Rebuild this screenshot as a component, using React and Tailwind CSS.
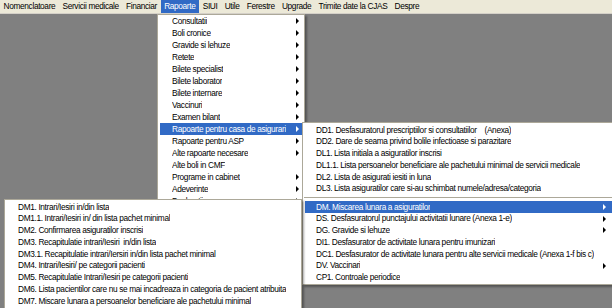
import React from "react";

const barItems = [
  "Nomenclatoare",
  "Servicii medicale",
  "Financiar",
  "Rapoarte",
  "SIUI",
  "Utile",
  "Ferestre",
  "Upgrade",
  "Trimite date la CJAS",
  "Despre",
];

const rapoarte = [
  { t: "Consultatii", sub: true },
  { t: "Boli cronice", sub: true },
  { t: "Gravide si lehuze", sub: true },
  { t: "Retete", sub: true },
  { t: "Bilete specialist", sub: true },
  { t: "Bilete laborator", sub: true },
  { t: "Bilete internare", sub: true },
  { t: "Vaccinuri", sub: true },
  { t: "Examen bilant", sub: true },
  { t: "Rapoarte pentru casa de asigurari", sub: true, on: true },
  { t: "Rapoarte pentru ASP", sub: true },
  { t: "Alte rapoarte necesare", sub: true },
  { t: "Alte boli in CMF" },
  { t: "Programe in cabinet", sub: true },
  { t: "Adeverinte", sub: true },
  { t: "Declaratii", sub: true },
];

const casa = [
  { t: "DD1. Desfasuratorul prescriptiilor si consultatiilor    (Anexa)" },
  { t: "DD2. Dare de seama privind bolile infectioase si parazitare" },
  { t: "DL1. Lista initiala a asiguratilor inscrisi" },
  { t: "DL1.1. Lista persoanelor beneficiare ale pachetului minimal de servicii medicale" },
  { t: "DL2. Lista de asigurati iesiti in luna" },
  { t: "DL3. Lista asiguratilor care si-au schimbat numele/adresa/categoria" },
  { sep: true },
  { t: "DM. Miscarea lunara a asiguratilor", sub: true, on: true },
  { t: "DS. Desfasuratorul punctajului activitatii lunare (Anexa 1-e)", sub: true },
  { t: "DG. Gravide si lehuze", sub: true },
  { t: "DI1. Desfasurator de activitate lunara pentru imunizari" },
  { t: "DC1. Desfasurator de activitate lunara pentru alte servicii medicale (Anexa 1-f bis c)" },
  { t: "DV. Vaccinari", sub: true },
  { t: "CP1. Controale periodice" },
];

const miscarea = [
  "DM1. Intrari/Iesiri in/din lista",
  "DM1.1. Intrari/Iesiri in/ din lista pachet minimal",
  "DM2. Confirmarea asiguratilor inscrisi",
  "DM3. Recapitulatie intrari/Iesiri  in/din lista",
  "DM3.1. Recapitulatie intrari/Iersiri in/din lista pachet minimal",
  "DM4. Intrari/Iesiri/ pe categorii pacienti",
  "DM5. Recapitulatie Intrari/Iesiri pe categorii pacienti",
  "DM6. Lista pacientilor care nu se mai incadreaza in categoria de pacient atribuita",
  "DM7. Miscare lunara a persoanelor beneficiare ale pachetului minimal",
];

function Arrow({ on }) {
  return (
    <svg width="3" height="6" viewBox="0 0 3 6" className="shrink-0">
      <polygon points="0,0 3,3 0,6" fill={on ? "#ffffff" : "#000000"} />
    </svg>
  );
}

function Row({ item, h, pl, pr }) {
  return (
    <div
      className={
        "mx-[2px] flex items-center justify-between whitespace-pre " +
        h +
        " " +
        pl +
        " " +
        pr +
        (item.on ? " bg-[#316ac5] text-white" : " text-black")
      }
    >
      <span className="overflow-hidden">{item.t}</span>
      {item.sub && <Arrow on={item.on} />}
    </div>
  );
}

export default function App() {
  return (
    <div className="relative h-[308px] w-[612px] overflow-hidden bg-[#808080] font-['Liberation_Sans',Arial,sans-serif] text-[8.3px] tracking-[-0.35px]">
      {/* bara de meniu */}
      <div className="flex h-[14px] items-stretch border-b border-[#d4d0c8] bg-[#ece9d8]">
        {barItems.map((b) => (
          <div
            key={b}
            className={
              "flex items-center px-[3.6px] whitespace-pre " +
              (b === "Rapoarte" ? "bg-[#316ac5] text-white" : "text-black")
            }
          >
            {b}
          </div>
        ))}
      </div>

      {/* Rapoarte */}
      <div className="absolute left-[157px] top-[14px] w-[148px] border border-[#aca899] bg-white shadow-[2px_2px_2px_rgba(0,0,0,0.35)]">
        {rapoarte.map((r) => (
          <Row key={r.t} item={r} h="h-[12px]" pl="pl-[12px]" pr="pr-[3px]" />
        ))}
      </div>

      {/* Rapoarte pentru casa de asigurari */}
      <div className="absolute left-[302px] top-[122px] w-[320px] border border-[#aca899] bg-white py-[1px] shadow-[2px_2px_2px_rgba(0,0,0,0.35)]">
        {casa.map((r, i) =>
          r.sep ? (
            <div key={i} className="flex h-[6.5px] items-center px-[1px]">
              <div className="h-[1px] w-full bg-[#aca899]" />
            </div>
          ) : (
            <Row key={r.t} item={r} h="h-[11.75px]" pl="pl-[11px]" pr="pr-[13px]" />
          )
        )}
      </div>

      {/* DM. Miscarea lunara a asiguratilor */}
      <div className="absolute left-[4px] top-[199px] w-[298px] border border-[#aca899] bg-white py-[1px] shadow-[2px_2px_2px_rgba(0,0,0,0.35)]">
        {miscarea.map((t) => (
          <Row key={t} item={{ t }} h="h-[11.75px]" pl="pl-[11px]" pr="pr-[3px]" />
        ))}
      </div>
    </div>
  );
}
